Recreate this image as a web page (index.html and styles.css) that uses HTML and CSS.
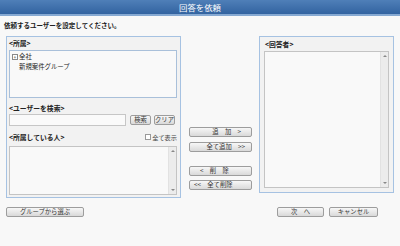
FILE: index.html
```html
<!DOCTYPE html>
<html lang="ja">
<head>
<meta charset="utf-8">
<link rel="stylesheet" href="styles.css">
</head>
<body>
<div class="titlebar">回答を依頼</div>
<div class="instr">依頼するユーザーを設定してください。</div>
<div class="main">
  <div class="panel left">
    <div class="head">&lt;所属&gt;</div>
    <div class="list tree">
      <div class="node"><span class="plus">+</span>全社</div>
      <div class="node child">新規案件グループ</div>
    </div>
    <div class="head2">&lt;ユーザーを検索&gt;</div>
    <div class="search">
      <div class="input"></div>
      <div class="btn small">検索</div>
      <div class="btn small">クリア</div>
    </div>
    <div class="head3">
      <span>&lt;所属している人&gt;</span>
      <span class="chk"><span class="box"></span>全て表示</span>
    </div>
    <div class="list gray members">
      <div class="sb"><span class="up"></span><span class="down"></span></div>
    </div>
  </div>
  <div class="mid">
    <div class="btn wide b1">追　加　&gt;</div>
    <div class="btn wide b2">全て追加　&gt;&gt;</div>
    <div class="btn wide b3">&lt;　削　除</div>
    <div class="btn wide b4">&lt;&lt;　全て削除</div>
  </div>
  <div class="panel right">
    <div class="head r">&lt;回答者&gt;</div>
    <div class="list gray answer">
      <div class="sb"><span class="up"></span><span class="down"></span></div>
    </div>
  </div>
</div>
<div class="footer">
  <div class="btn group">グループから選ぶ</div>
  <div class="actions">
    <div class="btn next">次　へ</div>
    <div class="btn cancel">キャンセル</div>
  </div>
</div>
</body>
</html>
```
FILE: styles.css
```css
* { box-sizing: border-box; }
body {
  margin: 0;
  width: 400px;
  height: 246px;
  background: #f8f8f8;
  font-family: "Noto Sans CJK JP", "Noto Sans", sans-serif;
  color: #222;
  overflow: hidden;
}
.titlebar {
  height: 16px;
  background: linear-gradient(#4f7fb8, #3263a0);
  border-bottom: 2px solid #86a9d2;
  color: #fff;
  font-size: 8.4px;
  line-height: 14px;
  text-align: center;
}
.instr {
  padding: 5px 0 0 4px;
  font-size: 6.5px;
  font-weight: bold;
  line-height: 8px;
  height: 20px;
}
.main {
  display: flex;
  align-items: flex-start;
  padding-left: 6px;
}
.panel {
  border: 1px solid #a6c2e2;
  background: #f2f2f2;
}
.left {
  width: 175px;
  height: 162px;
  padding: 0 3px 0 1px;
}
.head {
  height: 13px;
  font-size: 6.8px;
  font-weight: bold;
  line-height: 12px;
  padding-left: 1px;
}
.list {
  border: 1px solid #a9c0da;
  background: #f9f9f9;
  position: relative;
}
.list.gray { border-color: #c4c4c4; }
.tree {
  height: 48px;
  margin-left: 1px;
  padding: 1px 0 0 2px;
  font-size: 6.4px;
  line-height: 10px;
}
.node { display: flex; align-items: center; }
.plus {
  width: 6px;
  height: 6px;
  border: 1px solid #888;
  font-size: 5px;
  line-height: 4px;
  text-align: center;
  margin-right: 1px;
  background: #fff;
}
.child { padding-left: 7px; }
.head2 {
  margin-top: 5px;
  height: 10px;
  font-size: 6.8px;
  font-weight: bold;
  line-height: 10px;
  padding-left: 1px;
}
.search {
  display: flex;
  align-items: center;
  height: 13px;
  margin-left: 1px;
}
.input {
  width: 117px;
  height: 12px;
  border: 1px solid #c6c6c6;
  background: #fafafa;
}
.btn {
  border: 1px solid #9d9d9d;
  border-radius: 2px;
  background: linear-gradient(#f7f7f7, #d9d9d9);
  font-size: 6.3px;
  line-height: 8px;
  text-align: center;
  color: #333;
  white-space: nowrap;
}
.btn.small {
  height: 10px;
  width: 21px;
  margin-left: 4px;
}
.btn.small + .btn.small { margin-left: 3px; }
.head3 {
  display: flex;
  justify-content: space-between;
  align-items: center;
  height: 14px;
  margin-top: 4px;
  font-size: 6.8px;
  font-weight: bold;
  padding-left: 1px;
}
.chk {
  display: flex;
  align-items: center;
  font-weight: normal;
  font-size: 6.2px;
  color: #444;
}
.box {
  width: 6px;
  height: 6px;
  border: 1px solid #999;
  background: #fff;
  margin-right: 1px;
}
.members {
  height: 49px;
  margin: 2px 0 0 1px;
}
.sb {
  position: absolute;
  top: 0;
  right: 0;
  bottom: 0;
  width: 8px;
  background: #ececec;
  border-left: 1px solid #e2e2e2;
}
.up, .down {
  position: absolute;
  left: 2px;
  width: 0;
  height: 0;
  border-left: 2px solid transparent;
  border-right: 2px solid transparent;
}
.up { top: 3px; border-bottom: 2px solid #888; }
.down { bottom: 3px; border-top: 2px solid #888; }
.mid {
  width: 63px;
  margin-left: 8px;
  padding-top: 91px;
  display: flex;
  flex-direction: column;
}
.btn.wide { height: 10px; }
.b2 { margin-top: 5px; text-align: right; padding-right: 6px; }
.b1 { text-align: right; padding-right: 10px; }
.b3 { margin-top: 14px; text-align: left; padding-left: 10px; }
.b4 { margin-top: 4px; text-align: left; padding-left: 4px; }
.right {
  width: 135px;
  height: 157px;
  margin-left: 7px;
  padding: 0 4px;
}
.head.r { height: 14px; line-height: 15px; }
.answer { height: 137px; }
.footer {
  display: flex;
  margin-top: 9px;
  padding-left: 6px;
}
.btn.group { width: 78px; height: 10px; }
.actions {
  display: flex;
  margin-left: 193px;
}
.btn.next { width: 47px; height: 10px; }
.btn.cancel { width: 49px; height: 10px; margin-left: 5px; }
```
